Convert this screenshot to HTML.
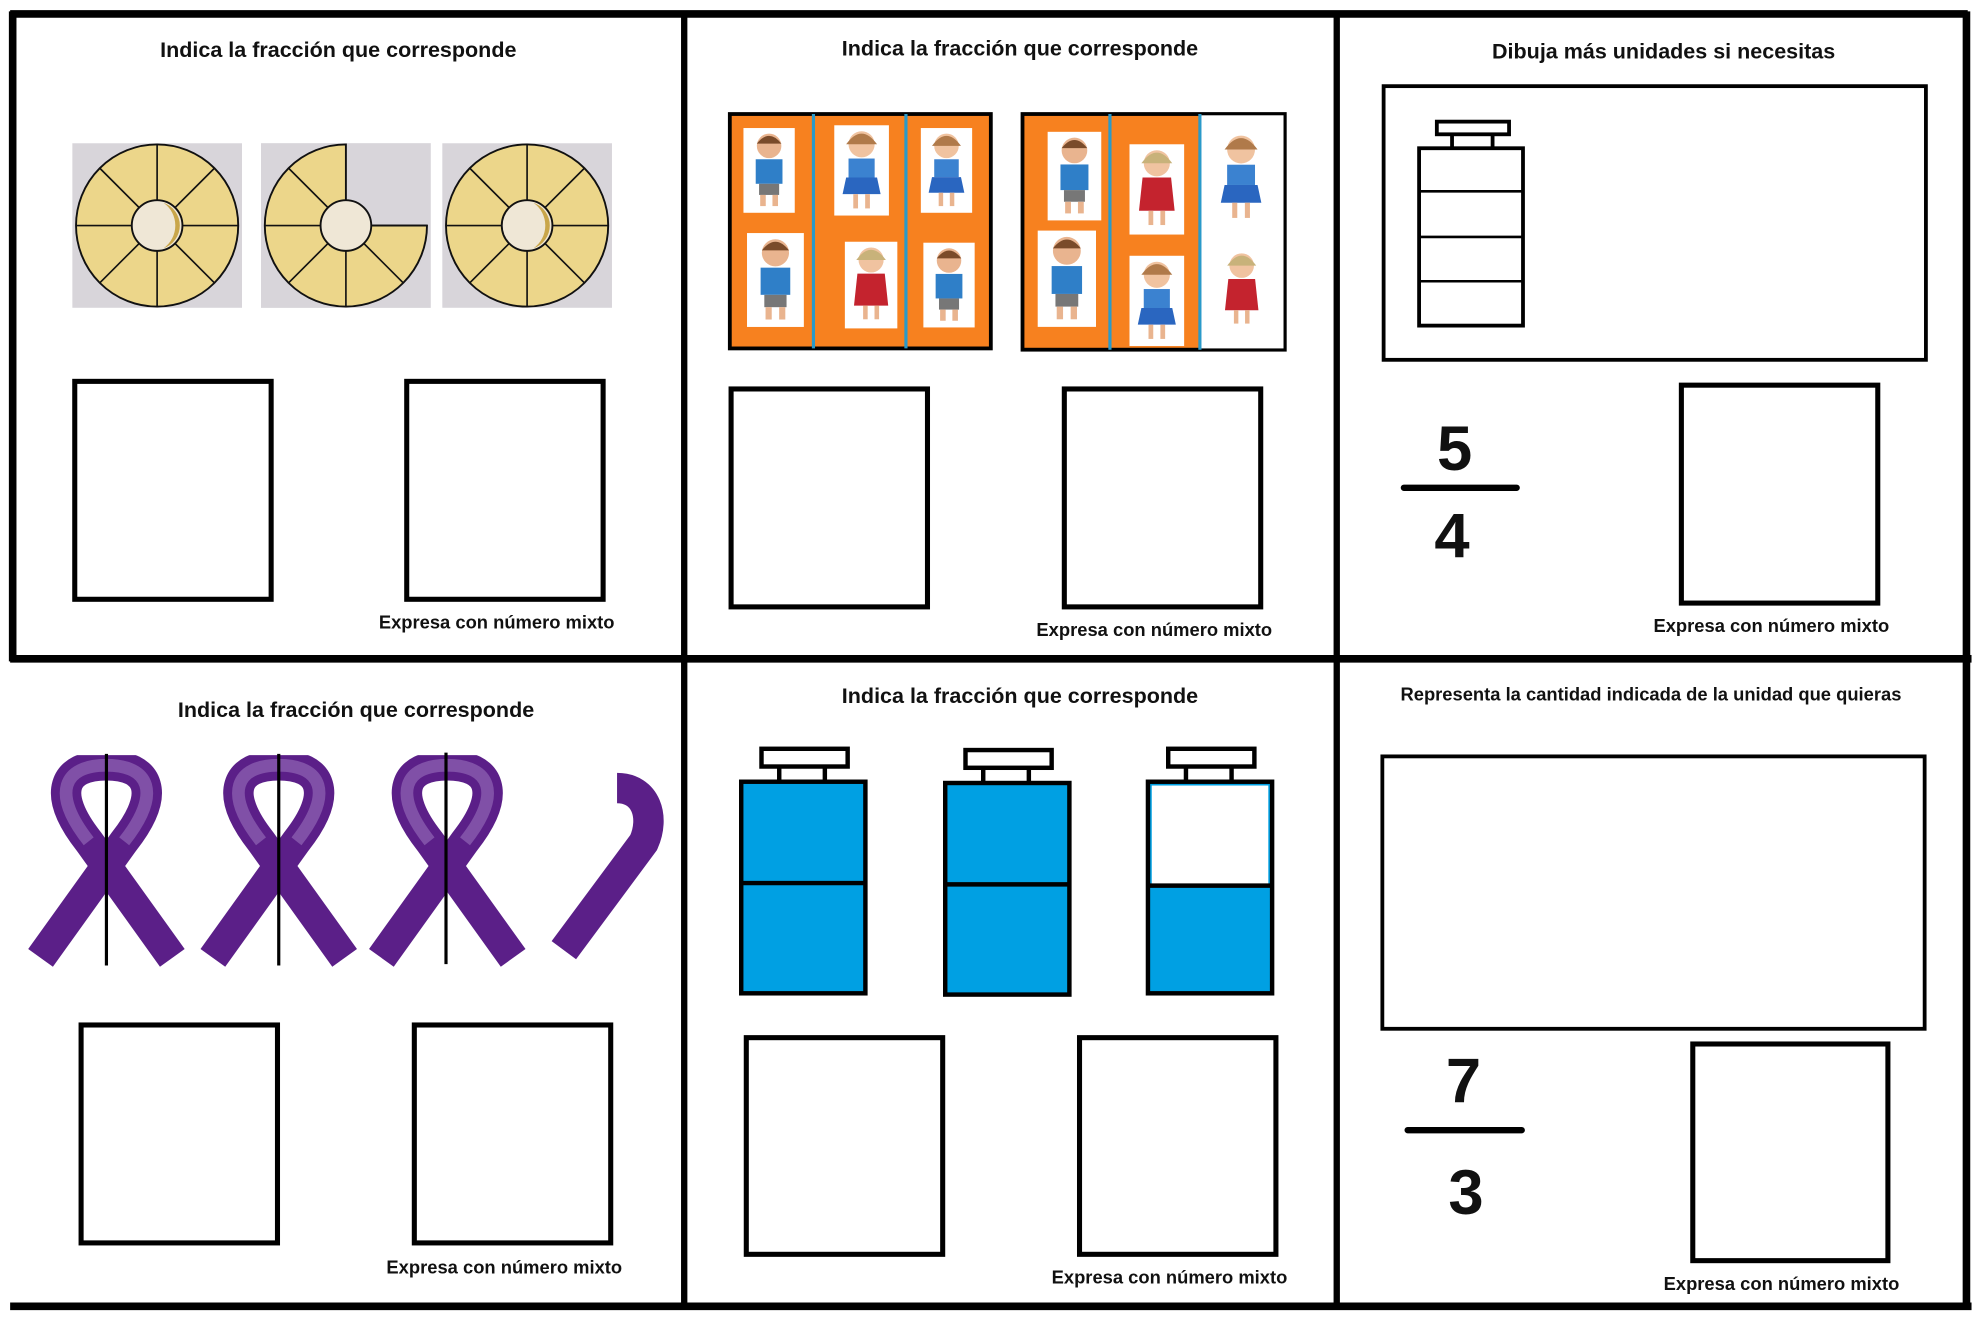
<!DOCTYPE html>
<html><head><meta charset="utf-8"><style>
html,body{margin:0;padding:0;background:#fff;}
svg{display:block}
text{font-family:"Liberation Sans","DejaVu Sans",sans-serif;font-weight:bold;fill:#111}
</style></head><body>
<svg width="1988" height="1324" viewBox="0 0 1569 1045" preserveAspectRatio="none" xmlns="http://www.w3.org/2000/svg">
<defs>
<symbol id="pine" viewBox="0 0 134 130" width="134" height="130">
  <rect width="134" height="130" fill="#d8d5da"/>
  <circle cx="67" cy="65" r="64" fill="#ecd68a" stroke="#111" stroke-width="1.5"/>
  <g stroke="#111" stroke-width="1.3">
   <line x1="67" y1="1" x2="67" y2="129"/><line x1="3" y1="65" x2="131" y2="65"/>
   <line x1="22" y1="20" x2="112" y2="110"/><line x1="112" y1="20" x2="22" y2="110"/>
  </g>
  <circle cx="67" cy="65" r="20" fill="#efe7d6" stroke="#111" stroke-width="1.5"/>
  <path d="M72 47 A19 19 0 0 1 72 83 A22 22 0 0 0 72 47Z" fill="#c9a64a"/>
</symbol>
<symbol id="ribbon" viewBox="-70 0 140 170" width="140" height="170">
  <path d="M52 160 L-14 68 C-44 30 -34 8 0 8 C34 8 44 30 14 68 L-52 160" fill="none" stroke="#5b1f88" stroke-width="24"/>
  <path d="M-14 68 C-44 30 -34 8 0 8 C34 8 44 30 14 68" fill="none" stroke="#9a72bd" stroke-width="10" opacity="0.6"/>
</symbol>
<symbol id="kidB" viewBox="0 0 50 80" width="50" height="80">
  <rect x="2" y="2" width="46" height="76" fill="#fff"/>
  <circle cx="25" cy="18" r="11" fill="#e9b48f"/><path d="M14 16 Q25 2 36 16Z" fill="#7a4b2a"/>
  <rect x="13" y="30" width="24" height="22" fill="#2f7fc8"/>
  <rect x="16" y="52" width="18" height="10" fill="#777"/>
  <rect x="17" y="62" width="5" height="10" fill="#e9b48f"/><rect x="28" y="62" width="5" height="10" fill="#e9b48f"/>
</symbol>
<symbol id="kidG" viewBox="0 0 50 80" width="50" height="80">
  <rect x="2" y="2" width="46" height="76" fill="#fff"/>
  <circle cx="25" cy="18" r="11" fill="#f0c3a0"/><path d="M12 18 Q25 0 38 18Z" fill="#b07a4a"/>
  <rect x="14" y="30" width="22" height="16" fill="#3b82d0"/>
  <path d="M12 46 L38 46 L41 60 L9 60Z" fill="#2a66c0"/>
  <rect x="18" y="60" width="4" height="12" fill="#e9b48f"/><rect x="28" y="60" width="4" height="12" fill="#e9b48f"/>
</symbol>
<symbol id="kidR" viewBox="0 0 50 80" width="50" height="80">
  <rect x="2" y="2" width="46" height="76" fill="#fff"/>
  <circle cx="25" cy="18" r="11" fill="#f0c3a0"/><path d="M12 18 Q25 0 38 18Z" fill="#c8b27a"/>
  <path d="M13 30 L37 30 L40 58 L10 58Z" fill="#c4232e"/>
  <rect x="18" y="58" width="4" height="12" fill="#e9b48f"/><rect x="28" y="58" width="4" height="12" fill="#e9b48f"/>
</symbol>
</defs>

<!-- frame -->
<g stroke="#000" fill="none">
 <line x1="8" y1="11" x2="1553" y2="11" stroke-width="6"/>
 <line x1="10" y1="9" x2="10" y2="522" stroke-width="6"/>
 <line x1="8" y1="520" x2="1556" y2="520" stroke-width="6"/>
 <line x1="8" y1="1031" x2="1556" y2="1031" stroke-width="6"/>
 <line x1="540" y1="11" x2="540" y2="1031" stroke-width="5"/>
 <line x1="1055" y1="11" x2="1055" y2="1031" stroke-width="5"/>
 <line x1="1552" y1="9" x2="1552" y2="1033" stroke-width="6"/>
</g>

<!-- panel 1 -->
<text x="267" y="45" font-size="17" text-anchor="middle">Indica la fracción que corresponde</text>
<use href="#pine" x="57" y="113"/>
<g transform="translate(206,113)">
 <rect width="134" height="130" fill="#d8d5da"/>
 <path d="M67 65 L67 1 A64 64 0 1 0 131 65 Z" fill="#ecd68a" stroke="#111" stroke-width="1.5"/>
 <g stroke="#111" stroke-width="1.3"><line x1="67" y1="65" x2="67" y2="129"/><line x1="3" y1="65" x2="67" y2="65"/><line x1="22" y1="20" x2="112" y2="110"/><line x1="67" y1="65" x2="22" y2="110"/></g>
 <path d="M67 65 L131 65" stroke="#111" stroke-width="1.5"/>
 <circle cx="67" cy="65" r="20" fill="#efe7d6" stroke="#111" stroke-width="1.5"/>
</g>
<use href="#pine" x="349" y="113"/>
<g fill="none" stroke="#000" stroke-width="4">
 <rect x="59" y="301" width="155" height="172"/><rect x="321" y="301" width="155" height="172"/>
</g>
<text x="392" y="496" font-size="14.5" text-anchor="middle">Expresa con número mixto</text>

<!-- panel 2 -->
<text x="805" y="44" font-size="17" text-anchor="middle">Indica la fracción que corresponde</text>
<rect x="576" y="90" width="206" height="185" fill="#f7811f" stroke="#000" stroke-width="3"/>
<line x1="642" y1="90" x2="642" y2="275" stroke="#2a9ac9" stroke-width="2.5"/>
<line x1="715" y1="90" x2="715" y2="275" stroke="#2a9ac9" stroke-width="2.5"/>
<use href="#kidB" x="585" y="97" width="44" height="75"/>
<use href="#kidG" x="655" y="97" width="50" height="75"/>
<use href="#kidG" x="725" y="97" width="44" height="75"/>
<use href="#kidB" x="587" y="182" width="50" height="78"/>
<use href="#kidR" x="665" y="186" width="45" height="78"/>
<use href="#kidB" x="727" y="186" width="44" height="78"/>
<rect x="807" y="90" width="207" height="186" fill="#f7811f" stroke="#000" stroke-width="3"/>
<rect x="947" y="91" width="66" height="184" fill="#fff"/>
<line x1="876" y1="90" x2="876" y2="276" stroke="#2a9ac9" stroke-width="2.5"/>
<line x1="947" y1="90" x2="947" y2="276" stroke="#2a9ac9" stroke-width="2.5"/>
<use href="#kidB" x="825" y="100" width="46" height="78"/>
<use href="#kidR" x="888" y="112" width="50" height="75"/>
<use href="#kidG" x="952" y="100" width="55" height="80"/>
<use href="#kidB" x="813" y="180" width="58" height="80"/>
<use href="#kidG" x="888" y="200" width="50" height="75"/>
<use href="#kidR" x="958" y="190" width="44" height="78"/>
<g fill="none" stroke="#000" stroke-width="4">
 <rect x="577" y="307" width="155" height="172"/><rect x="840" y="307" width="155" height="172"/>
</g>
<text x="911" y="502" font-size="14.5" text-anchor="middle">Expresa con número mixto</text>

<!-- panel 3 -->
<text x="1313" y="46" font-size="17" text-anchor="middle">Dibuja más unidades si necesitas</text>
<rect x="1092" y="68" width="428" height="216" fill="none" stroke="#000" stroke-width="3"/>
<g fill="none" stroke="#000" stroke-width="3">
 <rect x="1134" y="96" width="57" height="10"/>
 <line x1="1146" y1="106" x2="1146" y2="117"/><line x1="1178" y1="106" x2="1178" y2="117"/>
 <rect x="1120" y="117" width="82" height="140"/>
 <line x1="1120" y1="151" x2="1202" y2="151" stroke-width="2"/>
 <line x1="1120" y1="187" x2="1202" y2="187" stroke-width="2"/>
 <line x1="1120" y1="222" x2="1202" y2="222" stroke-width="2"/>
</g>
<text x="1148" y="371" font-size="50" text-anchor="middle">5</text>
<line x1="1108" y1="385" x2="1197" y2="385" stroke="#000" stroke-width="5" stroke-linecap="round"/>
<text x="1146" y="440" font-size="50" text-anchor="middle">4</text>
<rect x="1327" y="304" width="155" height="172" fill="none" stroke="#000" stroke-width="4"/>
<text x="1398" y="499" font-size="14.5" text-anchor="middle">Expresa con número mixto</text>

<!-- panel 4 -->
<text x="281" y="566" font-size="17" text-anchor="middle">Indica la fracción que corresponde</text>
<use href="#ribbon" x="14" y="596"/>
<use href="#ribbon" x="150" y="596"/>
<use href="#ribbon" x="283" y="596"/>
<path d="M487 622 C510 622 517 645 508 665 L445 750" fill="none" stroke="#5b1f88" stroke-width="24"/>
<g stroke="#000" stroke-width="2.5">
 <line x1="84" y1="595" x2="84" y2="762"/><line x1="220" y1="595" x2="220" y2="762"/><line x1="352" y1="594" x2="352" y2="761"/>
</g>
<g fill="none" stroke="#000" stroke-width="4">
 <rect x="64" y="809" width="155" height="172"/><rect x="327" y="809" width="155" height="172"/>
</g>
<text x="398" y="1005" font-size="14.5" text-anchor="middle">Expresa con número mixto</text>

<!-- panel 5 -->
<text x="805" y="555" font-size="17" text-anchor="middle">Indica la fracción que corresponde</text>
<g stroke="#000" stroke-width="3.5">
 <g transform="translate(584,0)">
  <rect x="17" y="591" width="68" height="14" fill="#fff"/>
  <line x1="31" y1="605" x2="31" y2="617"/><line x1="67" y1="605" x2="67" y2="617"/>
  <rect x="1" y="617" width="98" height="167" fill="#00a0e3"/>
  <line x1="1" y1="697" x2="99" y2="697"/>
 </g>
 <g transform="translate(745,1)">
  <rect x="17" y="591" width="68" height="14" fill="#fff"/>
  <line x1="31" y1="605" x2="31" y2="617"/><line x1="67" y1="605" x2="67" y2="617"/>
  <rect x="1" y="617" width="98" height="167" fill="#00a0e3"/>
  <line x1="1" y1="697" x2="99" y2="697"/>
 </g>
 <g transform="translate(905,0)">
  <rect x="17" y="591" width="68" height="14" fill="#fff"/>
  <line x1="31" y1="605" x2="31" y2="617"/><line x1="67" y1="605" x2="67" y2="617"/>
  <rect x="1" y="617" width="98" height="167" fill="#00a0e3"/>
  <rect x="4" y="620" width="92" height="78" fill="#fff" stroke="none"/>
  <line x1="1" y1="699" x2="99" y2="699"/>
 </g>
</g>
<g fill="none" stroke="#000" stroke-width="4">
 <rect x="589" y="819" width="155" height="171"/><rect x="852" y="819" width="155" height="171"/>
</g>
<text x="923" y="1013" font-size="14.5" text-anchor="middle">Expresa con número mixto</text>

<!-- panel 6 -->
<text x="1303" y="553" font-size="14.5" text-anchor="middle">Representa la cantidad indicada de la unidad que quieras</text>
<rect x="1091" y="597" width="428" height="215" fill="none" stroke="#000" stroke-width="3"/>
<text x="1155" y="870" font-size="50" text-anchor="middle">7</text>
<line x1="1111" y1="892" x2="1201" y2="892" stroke="#000" stroke-width="5" stroke-linecap="round"/>
<text x="1157" y="958" font-size="50" text-anchor="middle">3</text>
<rect x="1336" y="824" width="154" height="171" fill="none" stroke="#000" stroke-width="4"/>
<text x="1406" y="1018" font-size="14.5" text-anchor="middle">Expresa con número mixto</text>
</svg>
</body></html>
